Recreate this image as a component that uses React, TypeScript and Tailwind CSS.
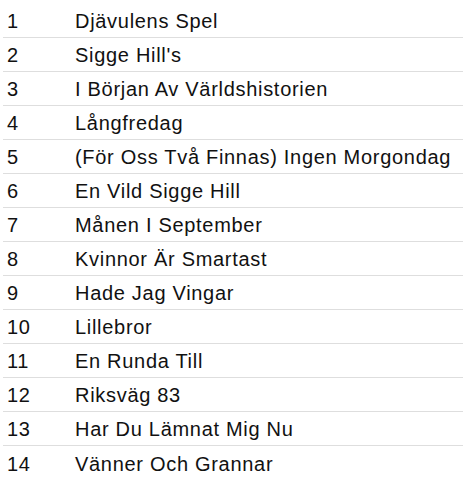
const tracks = [
  "Djävulens Spel",
  "Sigge Hill's",
  "I Början Av Världshistorien",
  "Långfredag",
  "(För Oss Två Finnas) Ingen Morgondag",
  "En Vild Sigge Hill",
  "Månen I September",
  "Kvinnor Är Smartast",
  "Hade Jag Vingar",
  "Lillebror",
  "En Runda Till",
  "Riksväg 83",
  "Har Du Lämnat Mig Nu",
  "Vänner Och Grannar",
];

export default function App() {
  return (
    <div className="bg-white w-[464px] h-[483px] pt-[4px] pl-[3px] pr-[1px] font-['Liberation_Sans',Arial,sans-serif] text-[#111]">
      {tracks.map((title, i) => (
        <div
          key={i}
          className={
            "flex items-center h-[34px] text-[20px] tracking-[0.7px] pt-[1px] " +
            (i < tracks.length - 1 ? "border-b border-[#dedede]" : "")
          }
        >
          <span className="w-[72px] pl-[4px]">{i + 1}</span>
          <span>{title}</span>
        </div>
      ))}
    </div>
  );
}
